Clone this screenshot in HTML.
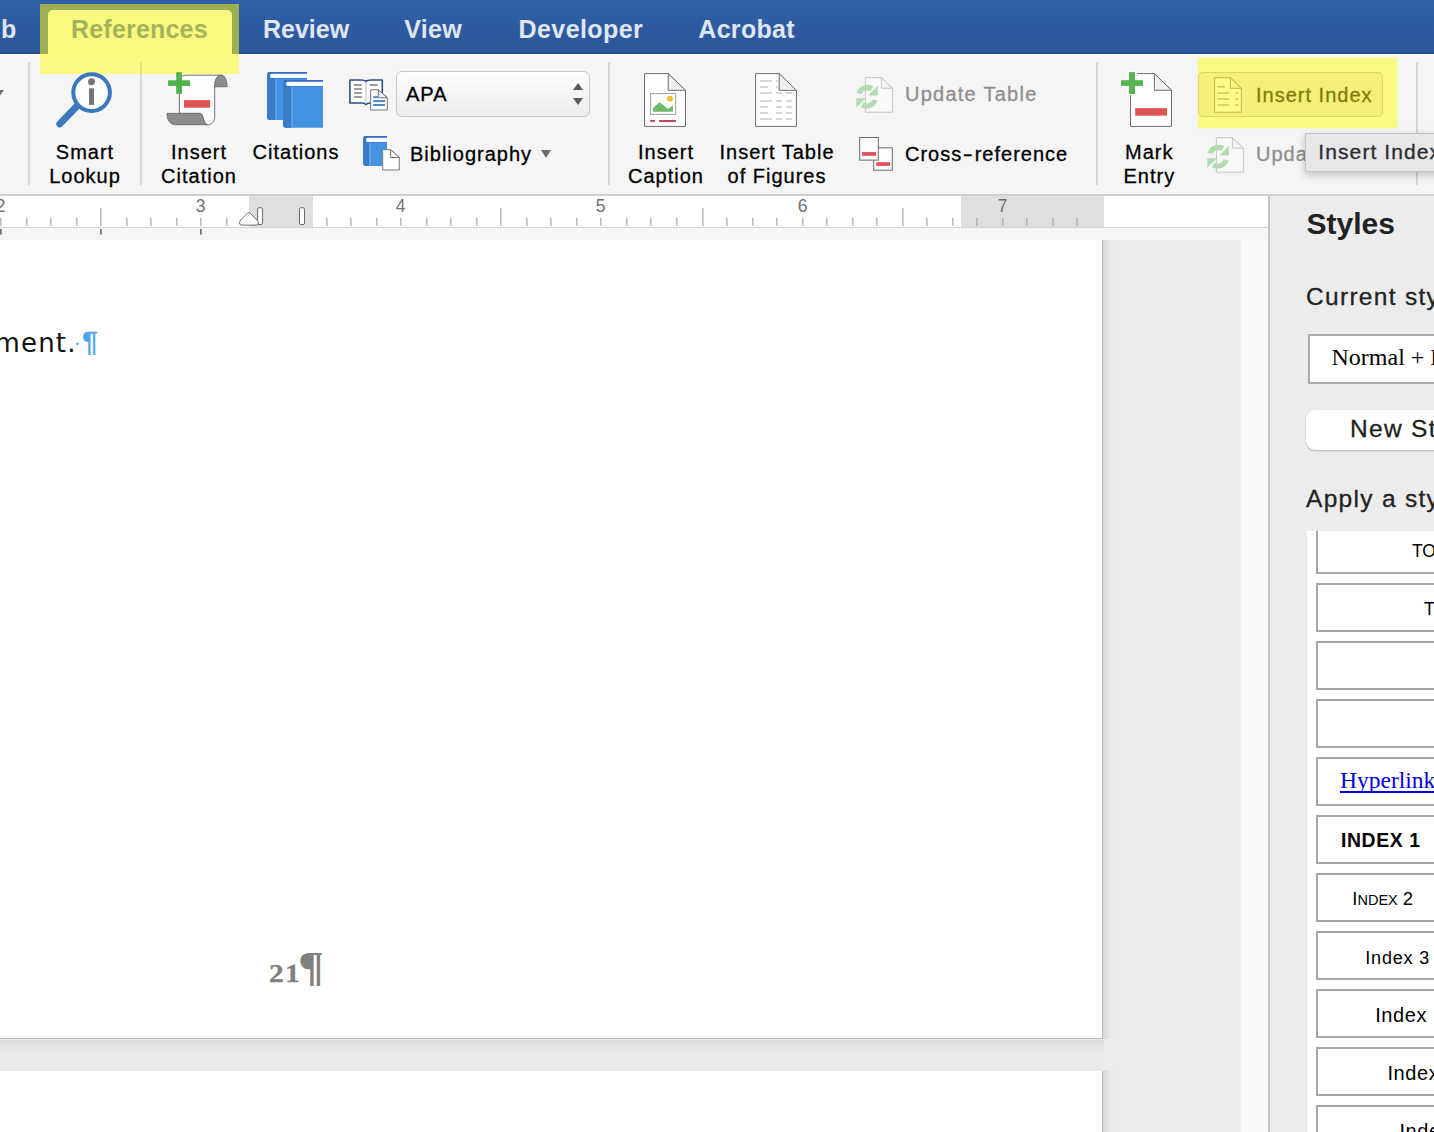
<!DOCTYPE html>
<html lang="en">
<head>
<meta charset="utf-8">
<title>Word - References - Insert Index</title>
<style>
*{box-sizing:border-box;margin:0;padding:0}
html,body{width:1434px;height:1132px;overflow:hidden;background:#ebebeb}
body{position:relative;font-family:"Liberation Sans",sans-serif;color:#000}
.abs{position:absolute}
.t{position:absolute;white-space:nowrap;line-height:1}
/* ---------- tab bar ---------- */
#tabbar{left:0;top:0;width:1434px;height:54px;background:linear-gradient(#3160a6,#2d5a9f 60%,#2b579a 96%,#244883 98%,#234680)}
.tab{position:absolute;top:17px;font-size:25px;font-weight:bold;color:#dfe6f2;line-height:1;white-space:nowrap}
/* ---------- ribbon ---------- */
#ribbon{left:0;top:54px;width:1434px;height:141px;background:#f5f5f5;border-top:1.3px solid #fdfdfd}
#ribbonline{left:0;top:194px;width:1434px;height:2px;background:#cfcfcf}
.sep{position:absolute;top:62px;width:2px;height:123px;background:#d6d6d6}
.lbl{position:absolute;-webkit-text-stroke:0.3px currentColor;font-size:20px;letter-spacing:1px;line-height:24px;text-align:center;white-space:nowrap;color:#000}
.gray{color:#8e8e8e}
/* ---------- ruler ---------- */
#ruler{left:0;top:196px;width:1269px;height:31px;background:#fff}
#rulerstrip{left:0;top:226.5px;width:1269px;height:13.5px;background:#f5f5f5;border-top:1px solid #d6d6d6}
.rn{position:absolute;top:197.6px;font-size:17.5px;line-height:1;color:#707070;width:30px;text-align:center}
/* ---------- doc ---------- */
#page1{left:-2px;top:240px;width:1105.4px;height:799.4px;background:#fff;border-right:1.5px solid #bdbdbd;border-bottom:1.5px solid #bbb}
#page2{left:-2px;top:1070.2px;width:1105.4px;height:80px;background:#fff;border-right:1.5px solid #bdbdbd;border-top:1.5px solid #bbb}
/* ---------- styles pane ---------- */
#pane{left:1268px;top:196px;width:166px;height:936px;background:#ececec;border-left:2px solid #c4c4c4}
.sbox{position:absolute;left:1316px;width:140px;height:49px;border:2px solid #a6a6a6;background:#fff}
</style>
</head>
<body>

<!-- ================= TAB BAR ================= -->
<div id="tabbar" class="abs"></div>
<!-- highlighter over blue bar (olive) -->
<div class="abs" style="left:40px;top:4px;width:199px;height:50px;background:#9fae55"></div>
<!-- active tab -->
<div class="abs" style="left:48px;top:10px;width:184px;height:46px;background:#fbf880;border-radius:5px 5px 0 0"></div>
<div class="tab" style="left:1px">b</div>
<div class="tab" style="left:71px;color:#a3b45a;letter-spacing:0.2px">References</div>
<div class="tab" style="left:263px">Review</div>
<div class="tab" style="left:404.3px;letter-spacing:.3px">View</div>
<div class="tab" style="left:518.6px;letter-spacing:.4px">Developer</div>
<div class="tab" style="left:698.3px;letter-spacing:.3px">Acrobat</div>

<!-- ================= RIBBON ================= -->
<div id="ribbon" class="abs"></div>
<div id="ribbonline" class="abs"></div>
<div class="abs" style="left:40px;top:54px;width:199px;height:19.5px;background:#fbf981"></div>
<div class="abs" style="left:1198px;top:58.3px;width:199px;height:70.2px;background:#fbf981;box-shadow:0 0 1.5px #fbf981"></div>
<div class="abs" style="left:1198px;top:71.5px;width:185px;height:45.5px;background:#f4f07a;border:1.5px solid #dcd766;border-radius:5px"></div>
<svg class="abs" style="left:0;top:0" width="1434" height="196" viewBox="0 0 1434 196">
<g><line x1="77.5" y1="105.5" x2="59.8" y2="123.9" stroke="#3b78bd" stroke-width="6.9" stroke-linecap="round"/><circle cx="91.6" cy="92.6" r="18.3" fill="#fdfdfd" stroke="#3b78bd" stroke-width="4"/><circle cx="91.5" cy="81.8" r="3.5" fill="#757575"/><rect x="89" y="88.3" width="5" height="16.6" fill="#757575"/></g>
<g stroke-linejoin="round"><path d="M179.4,92 L179.4,113.4 L200.2,113.4 C203.6,114 203.2,124.7 207.6,124.7 C212.2,124.7 214.7,121 214.7,116.5 L214.7,86.7 C214.7,80 217,75.2 221.4,75.2 L186.5,75.2 C182.5,75.2 180.6,76.6 179.4,79 Z" fill="#fdfdfd" stroke="#747474" stroke-width="1"/><path d="M221.4,75.2 C225.2,75.2 227.1,81 227.1,86.7 L214.7,86.7 C214.7,80 217,75.2 221.4,75.2 Z" fill="#8d8d8d" stroke="#6f6f6f" stroke-width="1"/><path d="M167,113.4 L200.2,113.4 C203.6,114 203.2,124.7 207.6,124.7 L175.5,124.7 C170,124.7 167,119.5 167,113.4 Z" fill="#8d8d8d" stroke="#6f6f6f" stroke-width="1"/><rect x="184" y="100.1" width="26.1" height="7.6" fill="#e05353"/><rect x="168.1" y="80.3" width="21.9" height="5.6" fill="#4fb14c"/><rect x="176.2" y="72.2" width="5.7" height="21.7" fill="#4fb14c"/></g>
<g><path d="M270,72 L307,72 L307,120 L270,120 Q267,120 267,117 L267,75 Q267,72 270,72 Z" fill="#4492e2"/><path d="M270,72 L275,72 L275,120 L270,120 Q267,120 267,117 L267,75 Q267,72 270,72 Z" fill="#3a7cc9"/><rect x="275" y="72" width="2" height="48" fill="#5c9fe8"/><path d="M270,72 L307,72 L307,74 L268,74 Q268,72 270,72 Z" fill="#2f6dba"/><path d="M271,73.8 L307,73.8 L307,78 L271,78 Q269,75.9 271,73.8 Z" fill="#fbfdff"/><rect x="269" y="78" width="38" height="1" fill="#3373c2" opacity=".6"/><path d="M286,80 L323,80 L323,127.8 L286,127.8 Q283,127.8 283,124.8 L283,83 Q283,80 286,80 Z" fill="#4492e2"/><path d="M286,80 L291,80 L291,127.8 L286,127.8 Q283,127.8 283,124.8 L283,83 Q283,80 286,80 Z" fill="#3a7cc9"/><rect x="291" y="80" width="2" height="47.8" fill="#5c9fe8"/><path d="M286,80 L323,80 L323,82 L284,82 Q284,80 286,80 Z" fill="#2f6dba"/><path d="M287,81.8 L323,81.8 L323,86 L287,86 Q285,83.9 287,81.8 Z" fill="#fbfdff"/><rect x="285" y="86" width="38" height="1" fill="#3373c2" opacity=".6"/></g>
<g><path d="M349.9,80 L349.9,103 L361,103 Q365,103 366,104.5 Q367,103 371,103 L382.3,103 L382.3,80 L371,80 Q367,80 366,81.5 Q365,80 361,80 Z" fill="#fdfeff" stroke="#2b4f80" stroke-width="1.6" stroke-linejoin="round"/><line x1="366" y1="81.5" x2="366" y2="104" stroke="#b9b9c4" stroke-width="1"/><g fill="#9d9d9d"><rect x="354" y="84" width="7.8" height="2"/><rect x="354" y="88" width="7.8" height="2"/><rect x="354" y="92" width="7.8" height="2"/><rect x="354" y="96" width="7.8" height="2"/><rect x="369.6" y="84" width="8.2" height="2"/></g><path d="M370.7,89.7 L378.3,89.7 L387.3,97.7 L387.3,110 L370.7,110 Z" fill="#fdfeff" stroke="#747474" stroke-width="1" stroke-linejoin="round"/><path d="M378.3,89.7 L378.3,97.7 L387.3,97.7 Z" fill="#f3f3f3" stroke="#747474" stroke-width="1" stroke-linejoin="round"/><g fill="#4c89cb"><rect x="373.2" y="96.2" width="5" height="2"/><rect x="373.2" y="100.1" width="11.8" height="2"/><rect x="373.2" y="104" width="11.8" height="2"/></g></g>
<g><path d="M366,136 L387,136 L387,166 L366,166 Q363,166 363,163 L363,139 Q363,136 366,136 Z" fill="#4492e2"/><path d="M366,136 L369,136 L369,166 L366,166 Q363,166 363,163 L363,139 Q363,136 366,136 Z" fill="#3a7cc9"/><rect x="369" y="136" width="2" height="30" fill="#5c9fe8"/><path d="M366,136 L387,136 L387,138 L364,138 Q364,136 366,136 Z" fill="#2f6dba"/><path d="M367,137.8 L387,137.8 L387,142 L367,142 Q365,139.9 367,137.8 Z" fill="#fbfdff"/><rect x="365" y="142" width="22" height="1" fill="#3373c2" opacity=".6"/><path d="M382.7,149.7 L390.6,149.7 L399.3,157.5 L399.3,170 L382.7,170 Z" fill="#fefefe" stroke="#7a7a7a" stroke-width="1" stroke-linejoin="round"/><path d="M390.6,149.7 L390.6,157.5 L399.3,157.5 Z" fill="#f4f4f4" stroke="#7a7a7a" stroke-width="1" stroke-linejoin="round"/></g>
<g><path d="M644.5,73.6 L668.2,73.6 L685.5,90.3 L685.5,126.4 L644.5,126.4 Z" fill="#fff" stroke="#6e6e6e" stroke-width="1" stroke-linejoin="round"/><path d="M668.2,73.6 L668.2,90.3 L685.5,90.3 Z" fill="#f1f1f1" stroke="#6e6e6e" stroke-width="1" stroke-linejoin="round"/><rect x="650.6" y="93.6" width="25.1" height="20.8" fill="#fff" stroke="#9c9c9c" stroke-width="1"/><path d="M653,111.8 L653,108 L659.7,102.3 L667.9,109 L673,105.4 L673,111.8 Z" fill="#6fbb6c"/><circle cx="670" cy="98.7" r="3" fill="#f0c233"/><rect x="650.2" y="120" width="4.7" height="1.9" fill="#cb3c52"/><rect x="659" y="120" width="17" height="1.9" fill="#cb3c52"/></g>
<g><path d="M755.6,73.6 L779.2,73.6 L796.4,90.3 L796.4,126.4 L755.6,126.4 Z" fill="#fff" stroke="#6e6e6e" stroke-width="1" stroke-linejoin="round"/><path d="M779.2,73.6 L779.2,90.3 L796.4,90.3 Z" fill="#f1f1f1" stroke="#6e6e6e" stroke-width="1" stroke-linejoin="round"/><g fill="#cdcdcd"><rect x="760" y="80.2" width="12" height="1.6"/><rect x="776" y="80.2" width="3" height="1.6"/><rect x="760" y="86.2" width="8" height="1.6"/><rect x="776" y="86.2" width="3" height="1.6"/><rect x="760" y="92.2" width="12" height="1.6"/><rect x="776" y="92.2" width="6" height="1.6"/><rect x="785.8" y="92.2" width="6.2" height="1.6"/><rect x="760" y="100.2" width="12" height="1.6"/><rect x="776" y="100.2" width="6" height="1.6"/><rect x="785.8" y="100.2" width="6.2" height="1.6"/><rect x="760" y="106.2" width="8" height="1.6"/><rect x="776" y="106.2" width="6" height="1.6"/><rect x="785.8" y="106.2" width="6.2" height="1.6"/><rect x="760" y="112.2" width="8" height="1.6"/><rect x="776" y="112.2" width="6" height="1.6"/><rect x="785.8" y="112.2" width="6.2" height="1.6"/><rect x="760" y="118.2" width="12" height="1.6"/><rect x="776" y="118.2" width="6" height="1.6"/><rect x="785.8" y="118.2" width="6.2" height="1.6"/></g></g>
<g transform="translate(0,0)"><path d="M865.4,77.7 L881.4,77.7 L892.4,88.2 L892.4,112.2 L865.4,112.2 Z" fill="#f9f9f9" stroke="#c6c6c6" stroke-width="1" stroke-linejoin="round"/><path d="M881.4,77.7 L881.4,88.2 L892.4,88.2 Z" fill="#f2f2f2" stroke="#c6c6c6" stroke-width="1" stroke-linejoin="round"/><g fill="#b2dbb0" stroke="none"><path d="M856.6,93 C859,85.6 866.5,83.2 873.2,86 L870.6,91 C866.6,89.2 863,90.2 861.6,94 Z"/><path d="M877.8,85.8 L877.8,95.4 L868.2,95.4 Z"/><path d="M856.3,98.2 L865.9,98.2 L856.3,107.8 Z"/><path d="M877.5,100.6 C875.1,108 867.6,110.4 860.9,107.6 L863.5,102.6 C867.5,104.4 871.1,103.4 872.5,99.6 Z"/></g></g>
<g><rect x="873.7" y="147.8" width="18.6" height="22.4" fill="#fefefe" stroke="#6b6b6b"/><rect x="876.2" y="162.2" width="13.8" height="3.7" fill="#e34e58"/><rect x="859.7" y="137.5" width="18.6" height="22.6" fill="#fefefe" stroke="#6b6b6b"/><rect x="862" y="152.1" width="14" height="3.7" fill="#e34e58"/></g>
<g><path d="M1130.5,73.6 L1154.4,73.6 L1171.5,90.3 L1171.5,126.4 L1130.5,126.4 Z" fill="#fff" stroke="#6e6e6e" stroke-width="1" stroke-linejoin="round"/><path d="M1154.4,73.6 L1154.4,90.3 L1171.5,90.3 Z" fill="#f1f1f1" stroke="#6e6e6e" stroke-width="1" stroke-linejoin="round"/><rect x="1127" y="71" width="10" height="24" fill="#fdfdfd"/><rect x="1120" y="78.5" width="24" height="9" fill="#f9f9f9"/><rect x="1135.2" y="108.1" width="31.8" height="7.6" fill="#e25555"/><rect x="1121" y="80.2" width="22" height="5.7" fill="#55b552"/><rect x="1129.1" y="72.1" width="5.9" height="21.9" fill="#55b552"/></g>
</svg>

<div class="sep" style="left:28px"></div>
<div class="sep" style="left:140px"></div>
<div class="abs" style="left:140px;top:62px;width:2px;height:11.5px;background:#e6e27c"></div>
<div class="sep" style="left:608px"></div>
<div class="sep" style="left:1096px"></div>
<div class="sep" style="left:1416px"></div>
<div class="abs" style="left:0;top:89.5px;width:0;height:0;border-left:6px solid transparent;border-right:5px solid transparent;border-top:7px solid #707070;margin-left:-7px"></div>
<div class="lbl" style="left:5px;top:140px;width:160px">Smart<br>Lookup</div>
<div class="lbl" style="left:119px;top:140px;width:160px">Insert<br>Citation</div>
<div class="lbl" style="left:216px;top:140px;width:160px">Citations</div>
<div class="lbl" style="left:586px;top:140px;width:160px">Insert<br>Caption</div>
<div class="lbl" style="left:697px;top:140px;width:160px">Insert Table<br>of Figures</div>
<div class="lbl" style="left:1069.3px;top:140px;width:160px">Mark<br>Entry</div>
<!-- style select -->
<div class="abs" style="left:396px;top:71px;width:194px;height:46px;border:1.5px solid #c9c9c9;border-radius:6px;background:linear-gradient(#fdfdfd,#ededed)"></div>
<div class="lbl" style="left:406px;top:82px;text-align:left">APA</div>
<div class="abs" style="left:573px;top:83px;width:0;height:0;border-left:5.5px solid transparent;border-right:5.5px solid transparent;border-bottom:7.5px solid #595959"></div>
<div class="abs" style="left:573px;top:98px;width:0;height:0;border-left:5.5px solid transparent;border-right:5.5px solid transparent;border-top:7.5px solid #595959"></div>
<div class="lbl" style="left:410px;top:142px;text-align:left">Bibliography</div>
<div class="abs" style="left:541px;top:150px;width:0;height:0;border-left:5px solid transparent;border-right:5px solid transparent;border-top:8.5px solid #6a6a6a"></div>
<div class="lbl gray" style="left:905px;top:82px;text-align:left;letter-spacing:1.25px">Update Table</div>
<div class="lbl" style="left:905px;top:142px;text-align:left">Cross<span style="display:inline-block;transform:scaleX(1.5);padding:0 2.2px 0 2.6px">-</span>reference</div>

<svg class="abs" style="left:1190px;top:54px" width="244" height="142" viewBox="1190 54 244 142">
<g><path d="M1214.6,77.7 L1230.4,77.7 L1241.3,88.3 L1241.3,112.2 L1214.6,112.2 Z" fill="#fffc8b" stroke="#bdb645" stroke-width="1" stroke-linejoin="round"/><path d="M1230.4,77.7 L1230.4,88.3 L1241.3,88.3 Z" fill="#faf684" stroke="#bdb645" stroke-width="1" stroke-linejoin="round"/><g fill="#cfc95f"><rect x="1217.3" y="86" width="7.7" height="1.6"/><rect x="1217.3" y="92.2" width="11.7" height="1.6"/><rect x="1235" y="92.2" width="3.2" height="1.6"/><rect x="1217.3" y="98.2" width="11.7" height="1.6"/><rect x="1235" y="98.2" width="3.2" height="1.6"/><rect x="1217.3" y="104.2" width="11.7" height="1.6"/><rect x="1235" y="104.2" width="3.2" height="1.6"/></g></g>
<g transform="translate(351,60)"><path d="M865.4,77.7 L881.4,77.7 L892.4,88.2 L892.4,112.2 L865.4,112.2 Z" fill="#f9f9f9" stroke="#c6c6c6" stroke-width="1" stroke-linejoin="round"/><path d="M881.4,77.7 L881.4,88.2 L892.4,88.2 Z" fill="#f2f2f2" stroke="#c6c6c6" stroke-width="1" stroke-linejoin="round"/><g fill="#b2dbb0" stroke="none"><path d="M856.6,93 C859,85.6 866.5,83.2 873.2,86 L870.6,91 C866.6,89.2 863,90.2 861.6,94 Z"/><path d="M877.8,85.8 L877.8,95.4 L868.2,95.4 Z"/><path d="M856.3,98.2 L865.9,98.2 L856.3,107.8 Z"/><path d="M877.5,100.6 C875.1,108 867.6,110.4 860.9,107.6 L863.5,102.6 C867.5,104.4 871.1,103.4 872.5,99.6 Z"/></g></g>
</svg>
<div class="lbl" style="left:1256px;top:82.6px;text-align:left;color:#807d05">Insert Index</div>
<div class="lbl gray" style="left:1256px;top:142px;text-align:left">Update Index</div>
<!-- tooltip -->
<div class="abs" style="left:1305px;top:133px;width:140px;height:39px;background:#e7e7e9;border:1px solid #c3c3c5;box-shadow:0 3px 8px rgba(0,0,0,.22)"></div>
<div class="t" style="left:1318.3px;top:141.2px;font-size:21px;letter-spacing:1.1px;-webkit-text-stroke:.3px #2b2b30;color:#2b2b30">Insert Index</div>

<!-- ================= RULER ================= -->
<div id="ruler" class="abs"></div>
<div id="rulerstrip" class="abs"></div>
<div class="abs" style="left:248.5px;top:196px;width:64.5px;height:31px;background:#dfdfdf"></div>
<div class="abs" style="left:960.6px;top:196px;width:143px;height:31px;background:#dfdfdf"></div>
<svg class="abs" style="left:0;top:196px" width="1269" height="44" viewBox="0 196 1269 44">
<g stroke="#adadad" stroke-width="1.3"><line x1="0.9" y1="218" x2="0.9" y2="226"/><line x1="26.9" y1="218" x2="26.9" y2="226"/><line x1="50.9" y1="218" x2="50.9" y2="226"/><line x1="76.9" y1="218" x2="76.9" y2="226"/><line x1="100.9" y1="208" x2="100.9" y2="226"/><line x1="126.9" y1="218" x2="126.9" y2="226"/><line x1="150.9" y1="218" x2="150.9" y2="226"/><line x1="176.9" y1="218" x2="176.9" y2="226"/><line x1="200.9" y1="218" x2="200.9" y2="226"/><line x1="226.9" y1="218" x2="226.9" y2="226"/><line x1="326.9" y1="218" x2="326.9" y2="226"/><line x1="350.9" y1="218" x2="350.9" y2="226"/><line x1="376.9" y1="218" x2="376.9" y2="226"/><line x1="400.9" y1="218" x2="400.9" y2="226"/><line x1="426.9" y1="218" x2="426.9" y2="226"/><line x1="450.9" y1="218" x2="450.9" y2="226"/><line x1="476.9" y1="218" x2="476.9" y2="226"/><line x1="500.9" y1="208" x2="500.9" y2="226"/><line x1="526.9" y1="218" x2="526.9" y2="226"/><line x1="550.9" y1="218" x2="550.9" y2="226"/><line x1="576.9" y1="218" x2="576.9" y2="226"/><line x1="600.9" y1="218" x2="600.9" y2="226"/><line x1="626.9" y1="218" x2="626.9" y2="226"/><line x1="650.9" y1="218" x2="650.9" y2="226"/><line x1="676.9" y1="218" x2="676.9" y2="226"/><line x1="702.9" y1="208" x2="702.9" y2="226"/><line x1="726.9" y1="218" x2="726.9" y2="226"/><line x1="752.9" y1="218" x2="752.9" y2="226"/><line x1="776.9" y1="218" x2="776.9" y2="226"/><line x1="802.9" y1="218" x2="802.9" y2="226"/><line x1="826.9" y1="218" x2="826.9" y2="226"/><line x1="852.9" y1="218" x2="852.9" y2="226"/><line x1="876.9" y1="218" x2="876.9" y2="226"/><line x1="902.9" y1="208" x2="902.9" y2="226"/><line x1="926.9" y1="218" x2="926.9" y2="226"/><line x1="952.9" y1="218" x2="952.9" y2="226"/><line x1="976.9" y1="218" x2="976.9" y2="226"/><line x1="1002.9" y1="218" x2="1002.9" y2="226"/><line x1="1026.9" y1="218" x2="1026.9" y2="226"/><line x1="1052.9" y1="218" x2="1052.9" y2="226"/><line x1="1076.9" y1="218" x2="1076.9" y2="226"/></g>
<g stroke="#4f4f4f" stroke-width="1.4"><line x1="0.9" y1="229" x2="0.9" y2="234.5"/><line x1="100.9" y1="229" x2="100.9" y2="234.5"/><line x1="200.9" y1="229" x2="200.9" y2="234.5"/></g>
<rect x="257.6" y="207.7" width="5" height="16.9" rx="1.5" fill="#fff" stroke="#6c6c6c" stroke-width="1"/><path d="M241.5,225.1 Q239.5,225.1 239.5,223.1 Q239.4,221.3 240.9,219.8 L247,213.6 Q248.8,211.8 250.6,213.6 L256.8,219.8 Q258.3,221.3 258.3,223.1 Q258.3,225.1 256.3,225.1 Z" fill="#fff" stroke="#6c6c6c" stroke-width="1"/>
<rect x="299.5" y="207.7" width="5" height="16.9" rx="1.5" fill="#fff" stroke="#6a6a6a" stroke-width="1"/>
</svg>
<div class="rn" style="left:-14.3px">2</div>
<div class="rn" style="left:185.7px">3</div>
<div class="rn" style="left:385.7px">4</div>
<div class="rn" style="left:585.7px">5</div>
<div class="rn" style="left:787.7px">6</div>
<div class="rn" style="left:987.7px">7</div>

<!-- ================= DOCUMENT ================= -->
<div id="page1" class="abs"></div>
<div id="page2" class="abs"></div>
<div class="abs" style="left:1103.4px;top:240px;width:11px;height:799.4px;background:linear-gradient(90deg,#d9d9d9,#e6e6e6 55%,#ebebeb)"></div>
<div class="abs" style="left:1103.4px;top:1070.2px;width:11px;height:62px;background:linear-gradient(90deg,#d9d9d9,#e6e6e6 55%,#ebebeb)"></div>
<div class="abs" style="left:0;top:1040px;width:1104px;height:31px;background:linear-gradient(#dadada,#e6e6e6 30%,#ebebeb 60%,#e9e9e9)"></div>
<div class="abs" style="left:1240px;top:240px;width:29px;height:892px;background:#f9f9f9;border-left:1px solid #efefef"></div>
<div class="t" style="right:1357.3px;top:330.2px;font-family:'DejaVu Sans','Liberation Sans',sans-serif;font-size:26px;letter-spacing:1.2px;color:#111">ment.</div>
<div class="t" style="left:73.9px;top:332.3px;font-size:20px;color:#4ba3ee">·</div>
<div class="t" style="left:81.8px;top:328.6px;font-size:27px;transform:scaleX(1.1);transform-origin:0 0;-webkit-text-stroke:.4px #4ba3ee;color:#4ba3ee">¶</div>
<div class="t" style="left:268.8px;top:961px;font-family:'Liberation Serif',serif;font-weight:bold;font-size:26px;letter-spacing:1.2px;transform:scaleX(1.13);transform-origin:0 0;-webkit-text-stroke:.3px #808080;color:#808080">21</div>
<div class="t" style="left:297.5px;top:947.2px;font-family:'Liberation Serif',serif;font-size:41.5px;font-weight:bold;transform:scaleX(1.16);transform-origin:0 0;color:#808080">¶</div>

<!-- ================= STYLES PANE ================= -->
<div id="pane" class="abs"></div>
<div class="t" style="left:1306.5px;top:208.6px;font-size:30px;font-weight:bold;color:#222">Styles</div>
<div class="t" style="left:1306px;top:285.3px;font-size:24.5px;letter-spacing:1.3px;-webkit-text-stroke:.3px #222;color:#222">Current style:</div>
<div class="abs" style="left:1308px;top:334px;width:140px;height:50px;background:#fff;border:2px solid #aaa"></div>
<div class="t" style="left:1331.5px;top:345.3px;font-family:'Liberation Serif',serif;font-size:24px;color:#000">Normal + Left:</div>
<div class="abs" style="left:1306px;top:410px;width:140px;height:40px;background:#fff;border-radius:9px;box-shadow:0 1px 2px rgba(0,0,0,.25)"></div>
<div class="t" style="left:1350px;top:417.2px;font-size:24.5px;letter-spacing:1.3px;-webkit-text-stroke:.3px #222;color:#222">New Style...</div>
<div class="t" style="left:1306px;top:487.1px;font-size:24.5px;letter-spacing:1.3px;-webkit-text-stroke:.3px #222;color:#222">Apply a style:</div>
<div class="abs" style="left:1307px;top:531px;width:140px;height:610px;background:#fff;overflow:hidden">
<div class="sbox" style="left:9px;top:-6px"></div>
<div class="t" style="left:105.0px;top:12.1px;font-size:17.5px;">TOC 8</div>
<div class="sbox" style="left:9px;top:52px"></div>
<div class="t" style="left:117.0px;top:70.0px;font-size:17.5px;">TOC 9</div>
<div class="sbox" style="left:9px;top:110px"></div>
<div class="sbox" style="left:9px;top:168px"></div>
<div class="sbox" style="left:9px;top:226px"></div>
<div class="t" style="left:33.0px;top:238.3px;font-family:'Liberation Serif',serif;font-size:23.5px;color:#0000e6;"><span style="text-decoration:underline;text-decoration-thickness:1.5px;text-underline-offset:2.5px;text-decoration-skip-ink:none">Hyperlink</span></div>
<div class="sbox" style="left:9px;top:284px"></div>
<div class="t" style="left:34.0px;top:300.4px;font-size:19.4px;font-weight:bold;letter-spacing:.6px;">INDEX 1</div>
<div class="sbox" style="left:9px;top:342px"></div>
<div class="t" style="left:45.3px;top:359.0px;font-size:18.5px;">I<span style="font-size:14.5px">NDEX</span> 2</div>
<div class="sbox" style="left:9px;top:400px"></div>
<div class="t" style="left:58.3px;top:417.6px;font-size:18px;letter-spacing:.8px;">Index 3</div>
<div class="sbox" style="left:9px;top:458px"></div>
<div class="t" style="left:68.2px;top:474.1px;font-size:20px;letter-spacing:.6px;word-spacing:4px;">Index 4</div>
<div class="sbox" style="left:9px;top:516px"></div>
<div class="t" style="left:80.4px;top:532.1px;font-size:20px;letter-spacing:.6px;word-spacing:4px;">Index 5</div>
<div class="sbox" style="left:9px;top:574px"></div>
<div class="t" style="left:92.4px;top:590.1px;font-size:20px;letter-spacing:.6px;word-spacing:4px;">Index 6</div>
</div>

</body>
</html>
